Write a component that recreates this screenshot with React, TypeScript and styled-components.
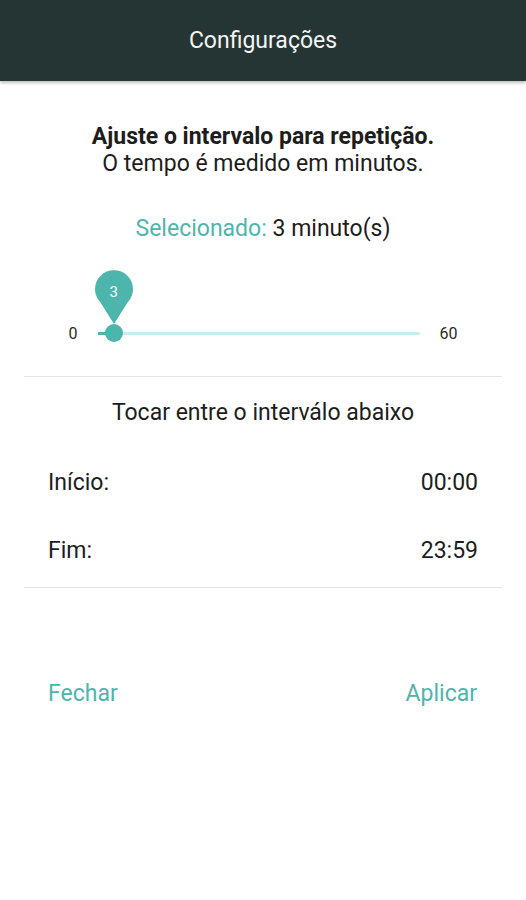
import React from "react";
import styled, { createGlobalStyle } from "styled-components";

const Global = createGlobalStyle`
  html, body { margin: 0; padding: 0; background: #ffffff; }
  body { font-family: Roboto, "Noto Sans", Arial, sans-serif; color: #1d1d1d; }
  * { box-sizing: border-box; }
`;

const TEAL = "#4db6ac";

const Page = styled.div`
  width: 526px;
  min-height: 900px;
  background: #fff;
  display: flex;
  flex-direction: column;
`;

const Header = styled.header`
  height: 81px;
  background: #253533;
  display: flex;
  align-items: center;
  justify-content: center;
  color: #f4f4f4;
  font-size: 23px;
  box-shadow: 0 2px 3px rgba(0, 0, 0, 0.25);
`;

const Content = styled.main`
  padding: 0 24px;
  display: flex;
  flex-direction: column;
`;

const Intro = styled.div`
  margin-top: 42px;
  text-align: center;
  font-size: 23px;
  line-height: 27px;
  color: #1d1d1d;
`;

const Strong = styled.div`
  font-weight: 700;
`;

const Selected = styled.div`
  margin-top: 38px;
  text-align: center;
  font-size: 23px;
  line-height: 27px;
  color: #1d1d1d;
`;

const Accent = styled.span`
  color: ${TEAL};
`;

const SliderRow = styled.div`
  margin-top: 81px;
  height: 20px;
  display: flex;
  align-items: center;
  justify-content: center;
  gap: 20px;
`;

const EdgeLabel = styled.span`
  font-size: 16px;
  color: #2a2a2a;
`;

const Track = styled.div`
  position: relative;
  width: 322px;
  height: 3px;
  background: #c6ecef;
  border-radius: 2px;
`;

const Fill = styled.div`
  position: absolute;
  left: 0;
  top: 0;
  height: 3px;
  background: ${TEAL};
`;

const Thumb = styled.div`
  position: absolute;
  top: 50%;
  width: 18px;
  height: 18px;
  margin: -9px 0 0 -9px;
  border-radius: 50%;
  background: ${TEAL};
`;

const Pin = styled.div`
  position: absolute;
  bottom: 10px;
  width: 40px;
  height: 55px;
  margin-left: -20px;
`;

const PinLabel = styled.span`
  position: absolute;
  left: 0;
  right: 0;
  top: 13px;
  text-align: center;
  color: #fff;
  font-size: 15px;
`;

const Divider = styled.hr<{ $top: number }>`
  margin: ${(p) => p.$top}px 0 0;
  border: none;
  border-top: 1px solid #e3e3e3;
  height: 0;
`;

const SubTitle = styled.div`
  margin-top: 22px;
  text-align: center;
  font-size: 23px;
  line-height: 27px;
  color: #1d1d1d;
`;

const TimeList = styled.div`
  margin-top: 22px;
  display: flex;
  flex-direction: column;
`;

const TimeRow = styled.div`
  height: 68px;
  display: flex;
  align-items: center;
  justify-content: space-between;
  padding: 0 24px;
  font-size: 23px;
  color: #1d1d1d;
`;

const Actions = styled.div`
  margin-top: 91px;
  height: 28px;
  display: flex;
  align-items: center;
  justify-content: space-between;
  padding: 0 25px 0 24px;
`;

const ActionButton = styled.button`
  background: none;
  border: none;
  padding: 0;
  font-family: inherit;
  font-size: 23px;
  color: ${TEAL};
  cursor: pointer;
`;

export default function App() {
  const min = 0;
  const max = 60;
  const value = 3;
  const pct = ((value - min) / (max - min)) * 100;
  return (
    <Page>
      <Global />
      <Header>Configurações</Header>
      <Content>
        <Intro>
          <Strong>Ajuste o intervalo para repetição.</Strong>
          <div>O tempo é medido em minutos.</div>
        </Intro>
        <Selected>
          <Accent>Selecionado:</Accent> {value} minuto(s)
        </Selected>
        <SliderRow>
          <EdgeLabel>{min}</EdgeLabel>
          <Track>
            <Fill style={{ width: `${pct}%` }} />
            <Pin style={{ left: `${pct}%` }}>
              <svg width="40" height="55" viewBox="0 0 40 55">
                <path
                  d="M20 54 L6.5 32.5 A19 19 0 1 1 33.5 32.5 Z"
                  fill={TEAL}
                />
              </svg>
              <PinLabel>{value}</PinLabel>
            </Pin>
            <Thumb style={{ left: `${pct}%` }} />
          </Track>
          <EdgeLabel>{max}</EdgeLabel>
        </SliderRow>
        <Divider $top={33} />
        <SubTitle>Tocar entre o interválo abaixo</SubTitle>
        <TimeList>
          <TimeRow>
            <span>Início:</span>
            <span>00:00</span>
          </TimeRow>
          <TimeRow>
            <span>Fim:</span>
            <span>23:59</span>
          </TimeRow>
        </TimeList>
        <Divider $top={3} />
        <Actions>
          <ActionButton>Fechar</ActionButton>
          <ActionButton>Aplicar</ActionButton>
        </Actions>
      </Content>
    </Page>
  );
}
